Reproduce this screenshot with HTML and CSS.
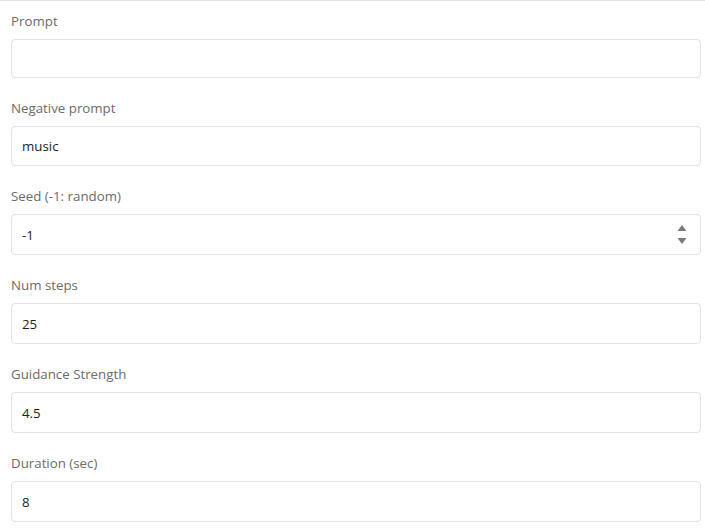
FILE: index.html
```html
<!DOCTYPE html>
<html>
<head>
<meta charset="utf-8">
<link rel="stylesheet" href="styles.css">
</head>
<body>
<div class="form">
  <div class="field">
    <label class="label">Prompt</label>
    <div class="input first"></div>
  </div>
  <div class="field">
    <label class="label">Negative prompt</label>
    <div class="input small">music</div>
  </div>
  <div class="field">
    <label class="label">Seed (-1: random)</label>
    <div class="input number">-1
      <svg class="spin" width="10" height="19" viewBox="0 0 10 19"><path d="M5 0 L9.5 6 H0.5 Z M5 19 L9.5 13 H0.5 Z" fill="#7a7a7a"/></svg>
    </div>
  </div>
  <div class="field">
    <label class="label">Num steps</label>
    <div class="input">25</div>
  </div>
  <div class="field">
    <label class="label">Guidance Strength</label>
    <div class="input">4.5</div>
  </div>
  <div class="field">
    <label class="label">Duration (sec)</label>
    <div class="input">8</div>
  </div>
</div>
</body>
</html>
```
FILE: styles.css
```css
html, body {
  margin: 0;
  padding: 0;
  background: #ffffff;
}
body {
  font-family: "Open Sans", "Noto Sans", "Liberation Sans", sans-serif;
  font-size: 13.3px;
}
.form {
  border-top: 1px solid #e3e3e3;
  padding: 10px 4px 0 11px;
  display: flex;
  flex-direction: column;
  gap: 20px;
}
.field {
  display: flex;
  flex-direction: column;
  gap: 8px;
}
.label {
  display: block;
  height: 20px;
  line-height: 20px;
  color: #6b6b6b;
}
.input {
  box-sizing: border-box;
  height: 41px;
  border: 1px solid #e3e3e3;
  border-radius: 4px;
  padding: 0 10px;
  display: flex;
  align-items: center;
  color: #1f1f1f;
  font-size: 13.3px;
}
.input.first {
  height: 39px;
}
.input.small {
  height: 40px;
}
.input.number {
  justify-content: space-between;
  padding-right: 13px;
}
.spin {
  display: block;
}
```
